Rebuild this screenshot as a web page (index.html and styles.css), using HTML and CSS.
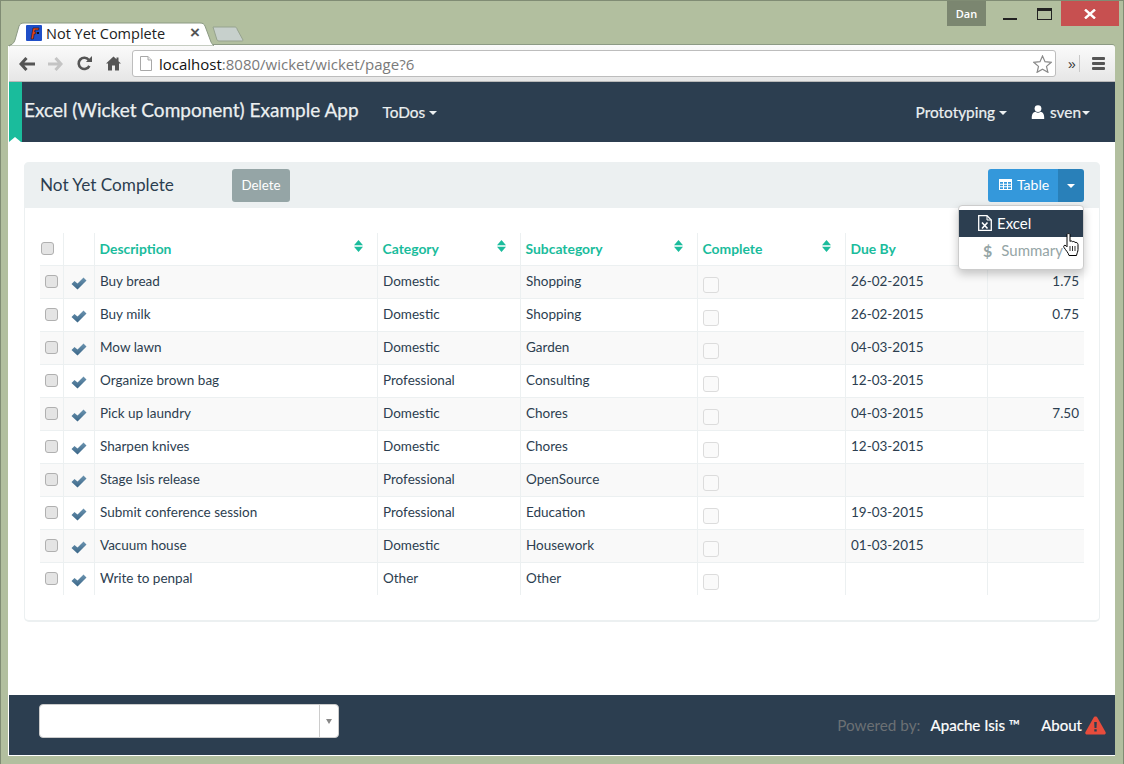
FILE: index.html
```html
<!DOCTYPE html>
<html lang="en">
<head>
<meta charset="utf-8">
<title>Not Yet Complete</title>
<link rel="stylesheet" href="styles.css">
</head>
<body>
<svg class="defs" width="0" height="0" aria-hidden="true">
  <defs>
    <linearGradient id="chk" x1="0" y1="0" x2="0" y2="1"><stop offset="0" stop-color="#6c94b0"/><stop offset="1" stop-color="#3a6688"/></linearGradient>
    <symbol id="check" viewBox="0 0 16 13"><path d="M0.500 7 L3.500 4 L6.500 6.500 L12.500 0.500 L15.500 3.500 L6.500 12.500 Z" fill="url(#chk)"/></symbol>
    <symbol id="sort" viewBox="0 0 9 12"><path d="M4.500 0 L9 5.300 H0 Z M0 6.700 H9 L4.500 12 Z" fill="#1abc9c"/></symbol>
  </defs>
</svg>
<div class="window">
  <div class="titlebar">
    <div class="tab">
      <svg class="tab-shape" width="206" height="24" viewBox="0 0 206 24"><path d="M0 24 C4 23 6 21 7 18 L11 4 C12 2 13 1 16 1 H192 C195 1 196 2 197 4 L203 20 C204 22 205 23 206 24 Z" fill="#fff" stroke="#8c9a84"/></svg>
      <svg class="favicon" width="16" height="16" viewBox="0 0 16 16"><rect width="16" height="16" rx="1" fill="#1f4fc8"/><path d="M5 14 L7 3 H13 L12.500 5 H9 L8.600 7 H10 L9.600 9 H8.200 L7.400 14 Z" fill="#e8401c" stroke="#1a1a1a" stroke-width=".6"/><rect x="11" y="7" width="2" height="2" fill="#111"/></svg>
      <span class="tab-title">Not Yet Complete</span>
      <span class="tab-close">×</span>
    </div>
    <svg class="newtab" width="32" height="16" viewBox="0 0 32 16"><path d="M1 1 H23 C24 1 25 2 25 3 L31 14 C31 15 30 15 29 15 H7 C6 15 5.500 14.500 5 14 Z" fill="#c7d0cc" stroke="#97a38f"/></svg>
    <div class="caption">
      <div class="user-badge">Dan</div>
      <div class="cap-btn">
        <span class="cap-min"></span>
      </div>
      <div class="cap-btn">
        <span class="cap-max"></span>
      </div>
      <div class="cap-close">
        <svg width="12" height="10" viewBox="0 0 12 10"><path d="M1 0.500 L11 9.500 M11 0.500 L1 9.500" stroke="#fff" stroke-width="2.400"/></svg>
      </div>
    </div>
  </div>

  <div class="browser">
    <div class="toolbar">
      <svg class="tool" width="16" height="14" viewBox="0 0 16 14"><path d="M7.500 1 L2 7 L7.500 13 M2.500 7 H16" fill="none" stroke="#555" stroke-width="3"/></svg>
      <svg class="tool tool-b" width="15" height="14" viewBox="0 0 15 14"><path d="M7.500 1 L13 7 L7.500 13 M12.500 7 H0" fill="none" stroke="#c4c4c4" stroke-width="3"/></svg>
      <svg class="tool tool-c" width="15" height="15" viewBox="0 0 16 16"><path d="M13.200 10.500 A6 6 0 1 1 12.600 4.300" fill="none" stroke="#555" stroke-width="2.800"/><path d="M9.500 6.500 H16 V0 Z" fill="#555"/></svg>
      <svg class="tool tool-d" width="15" height="15" viewBox="0 0 15 15"><path d="M7.500 0.500 L0 7.500 H2 V14.500 H6 V9.500 H9 V14.500 H13 V7.500 H15 L12.500 5.200 V1.500 H10.500 V3.300 Z" fill="#555"/></svg>
      <div class="address">
        <svg width="12" height="15" viewBox="0 0 12 15"><path d="M0.500 0.500 H8 L11.500 4 V14.500 H0.500 Z" fill="#fff" stroke="#a8a8a8"/><path d="M8 .5 V4 H11.500" fill="#eee" stroke="#a8a8a8"/></svg>
        <span class="url"><span class="url-host">localhost</span>:8080/wicket/wicket/page?6</span>
        <svg class="star" width="19" height="18" viewBox="0 0 19 18"><path d="M9.500 1 L12 6.700 L18.200 7.300 L13.500 11.400 L14.900 17.300 L9.500 14.200 L4.100 17.300 L5.500 11.400 L0.800 7.300 L7 6.700 Z" fill="#fff" stroke="#8a8a8a" stroke-width="1.200"/></svg>
      </div>
      <span class="more">»</span>
      <span class="tool-sep"></span>
      <span class="menu-btn"><i></i><i></i><i></i></span>
    </div>

    <nav class="navbar">
      <div class="nav-marker"></div>
      <a class="brand">Excel (Wicket Component) Example App</a>
      <a class="nav-link">ToDos <b class="caret"></b></a>
      <div class="nav-right">
        <a class="nav-link">Prototyping <b class="caret"></b></a>
        <a class="nav-link user-link">
          <svg width="14" height="14" viewBox="0 0 14 14"><circle cx="7" cy="3.600" r="3.400" fill="#fff"/><path d="M0.800 14 C0.400 9 2.500 7 4.500 6.800 C6 8 8 8 9.500 6.800 C11.500 7 13.600 9 13.200 14 Z" fill="#fff"/></svg>
          sven<b class="caret"></b>
        </a>
      </div>
    </nav>

    <main class="content">
      <section class="panel">
        <header class="panel-head">
          <h1 class="panel-title">Not Yet Complete</h1>
          <button class="btn-delete">Delete</button>
          <div class="btn-group">
            <button class="btn-table">
              <svg width="13" height="11" viewBox="0 0 13 11"><path fill-rule="evenodd" d="M0 0 H13 V11 H0 Z M1 3 V4.700 H4 V3 Z M5 3 V4.700 H8 V3 Z M9 3 V4.700 H12 V3 Z M1 5.700 V7.300 H4 V5.700 Z M5 5.700 V7.300 H8 V5.700 Z M9 5.700 V7.300 H12 V5.700 Z M1 8.300 V10 H4 V8.300 Z M5 8.300 V10 H8 V8.300 Z M9 8.300 V10 H12 V8.300 Z" fill="#fff"/></svg>
              Table
            </button>
            <button class="btn-toggle"><b class="caret"></b></button>
            <ul class="menu">
              <li class="menu-item active">
                <svg width="14" height="16" viewBox="0 0 14 16"><path d="M0.700 0.700 H9 L13.300 5 V15.300 H0.700 Z" fill="none" stroke="#fff" stroke-width="1.300"/><path d="M9 .7 V5 H13.300" fill="none" stroke="#fff"/><path d="M4 7.500 L9.500 13.500 M9.500 7.500 L4 13.500" stroke="#fff" stroke-width="1.600"/></svg>
                Excel
              </li>
              <li class="menu-item muted"><span class="dollar">$</span> Summary</li>
            </ul>
            <svg class="cursor" width="16" height="23" viewBox="0 0 16 23"><path d="M4 1.500 C4 0.300 7 0.300 7 1.500 V8.500 C7.500 7.700 9.300 7.700 9.600 8.800 C10.200 8.200 11.800 8.400 12 9.500 C13 9 15 9.800 15 11.500 V16.500 C15 18.500 14 20 13.500 22.500 H6 C5.500 20 3 17.500 1 14.500 C0 13 1.500 11.500 3 12.800 L4 13.800 Z" fill="#fff" stroke="#000" stroke-width="1"/><path d="M7 13 V18 M9.500 13 V18 M12 13 V18" stroke="#000" stroke-width=".8"/></svg>
          </div>
        </header>
        <div class="panel-body">
          <table class="data">
            <colgroup>
              <col class="c1"><col class="c2"><col class="c3"><col class="c4"><col class="c5"><col class="c6"><col class="c7"><col class="c8">
            </colgroup>
            <thead>
              <tr>
                <th class="center"><input type="checkbox" class="cb"></th>
                <th></th>
                <th><span class="th-in">Description<svg width="9" height="12"><use href="#sort"/></svg></span></th>
                <th><span class="th-in">Category<svg width="9" height="12"><use href="#sort"/></svg></span></th>
                <th><span class="th-in">Subcategory<svg width="9" height="12"><use href="#sort"/></svg></span></th>
                <th><span class="th-in">Complete<svg width="9" height="12"><use href="#sort"/></svg></span></th>
                <th><span class="th-in">Due By</span></th>
                <th></th>
              </tr>
            </thead>
            <tbody>
              <tr><td class="rowcb"><input type="checkbox" class="cb"></td><td class="ck"><svg width="16" height="13"><use href="#check"/></svg></td><td>Buy bread</td><td>Domestic</td><td>Shopping</td><td class="donecell"><span class="done"></span></td><td>26-02-2015</td><td class="num">1.75</td></tr>
              <tr><td class="rowcb"><input type="checkbox" class="cb"></td><td class="ck"><svg width="16" height="13"><use href="#check"/></svg></td><td>Buy milk</td><td>Domestic</td><td>Shopping</td><td class="donecell"><span class="done"></span></td><td>26-02-2015</td><td class="num">0.75</td></tr>
              <tr><td class="rowcb"><input type="checkbox" class="cb"></td><td class="ck"><svg width="16" height="13"><use href="#check"/></svg></td><td>Mow lawn</td><td>Domestic</td><td>Garden</td><td class="donecell"><span class="done"></span></td><td>04-03-2015</td><td class="num"></td></tr>
              <tr><td class="rowcb"><input type="checkbox" class="cb"></td><td class="ck"><svg width="16" height="13"><use href="#check"/></svg></td><td>Organize brown bag</td><td>Professional</td><td>Consulting</td><td class="donecell"><span class="done"></span></td><td>12-03-2015</td><td class="num"></td></tr>
              <tr><td class="rowcb"><input type="checkbox" class="cb"></td><td class="ck"><svg width="16" height="13"><use href="#check"/></svg></td><td>Pick up laundry</td><td>Domestic</td><td>Chores</td><td class="donecell"><span class="done"></span></td><td>04-03-2015</td><td class="num">7.50</td></tr>
              <tr><td class="rowcb"><input type="checkbox" class="cb"></td><td class="ck"><svg width="16" height="13"><use href="#check"/></svg></td><td>Sharpen knives</td><td>Domestic</td><td>Chores</td><td class="donecell"><span class="done"></span></td><td>12-03-2015</td><td class="num"></td></tr>
              <tr><td class="rowcb"><input type="checkbox" class="cb"></td><td class="ck"><svg width="16" height="13"><use href="#check"/></svg></td><td>Stage Isis release</td><td>Professional</td><td>OpenSource</td><td class="donecell"><span class="done"></span></td><td></td><td class="num"></td></tr>
              <tr><td class="rowcb"><input type="checkbox" class="cb"></td><td class="ck"><svg width="16" height="13"><use href="#check"/></svg></td><td>Submit conference session</td><td>Professional</td><td>Education</td><td class="donecell"><span class="done"></span></td><td>19-03-2015</td><td class="num"></td></tr>
              <tr><td class="rowcb"><input type="checkbox" class="cb"></td><td class="ck"><svg width="16" height="13"><use href="#check"/></svg></td><td>Vacuum house</td><td>Domestic</td><td>Housework</td><td class="donecell"><span class="done"></span></td><td>01-03-2015</td><td class="num"></td></tr>
              <tr><td class="rowcb"><input type="checkbox" class="cb"></td><td class="ck"><svg width="16" height="13"><use href="#check"/></svg></td><td>Write to penpal</td><td>Other</td><td>Other</td><td class="donecell"><span class="done"></span></td><td></td><td class="num"></td></tr>
            </tbody>
          </table>
        </div>
      </section>
    </main>

    <footer class="footer">
      <div class="select"><span class="select-arrow"><b></b></span></div>
      <div class="foot-right">
        <span class="powered">Powered by:</span>
        <a class="foot-link isis">Apache Isis ™</a>
        <a class="foot-link">About</a>
        <svg width="21" height="19" viewBox="0 0 21 19"><path d="M10.500 0.500 C11.500 0.500 12 1 12.500 1.800 L20.500 16 C21.200 17.300 20.500 18.500 19 18.500 H2 C0.500 18.500 -0.200 17.300 .5 16 L8.500 1.800 C9 1 9.500 0.500 10.500 0.500 Z" fill="#e74c3c"/><path d="M9.200 6 H11.800 L11.500 12 H9.500 Z M9.300 13.300 H11.700 V15.600 H9.300 Z" fill="#2c3e50"/></svg>
      </div>
    </footer>
  </div>
</div>
</body>
</html>
```
FILE: styles.css
```css
* { box-sizing: border-box; }
html, body { margin: 0; padding: 0; height: 100%; overflow: hidden; }
body { font-family: Lato, "Open Sans", sans-serif; font-size: 14px; color: #2c3e50; background: #b2bf9f; }
.defs { position: absolute; }
.window { width: 1124px; height: 764px; display: flex; flex-direction: column; background: #b2bf9f; border: 1px solid #808c74; border-bottom: 0; padding: 0 8px 8px 7px; }

.titlebar { height: 44px; flex: none; display: flex; align-items: flex-end; position: relative; }
.tab { width: 212px; height: 24px; position: relative; margin-left: 3px; display: flex; align-items: center; padding: 0 0 0 15px; z-index: 1; }
.tab-shape { position: absolute; left: -3px; bottom: -1px; }
.favicon { position: relative; flex: none; }
.tab-title { position: relative; font-family: "Open Sans", sans-serif; font-size: 14.500px; color: #222; margin-left: 4px; white-space: nowrap; }
.tab-close { position: absolute; left: 179px; top: 2px; font-size: 17px; font-weight: 700; color: #555; font-family: "Liberation Sans", sans-serif; }
.newtab { position: relative; margin: 0 0 3px -11px; flex: none; }
.caption { position: absolute; right: -4px; top: 0; display: flex; align-items: flex-start; }
.user-badge { width: 39px; height: 25px; background: #7b8670; color: #fff; font-family: "Open Sans", sans-serif; font-size: 11px; font-weight: 600; display: flex; align-items: center; justify-content: center; margin-right: 7px; }
.cap-btn { width: 34px; height: 25px; display: flex; align-items: center; justify-content: center; }
.cap-min { width: 14px; height: 2px; background: #222; margin-top: 11px; }
.cap-max { width: 15px; height: 12px; border: 1px solid #222; border-top-width: 3px; }
.cap-close { width: 58px; height: 25px; background: #c75050; display: flex; align-items: center; justify-content: center; }

.browser { flex: 1; display: flex; flex-direction: column; border-left: 1px solid #fff; border-bottom: 1px solid #fff; min-height: 0; }
.toolbar { height: 37px; flex: none; background: linear-gradient(#fbfbfb, #e6e6e6); border-bottom: 1px solid #b9b9b9; border-radius: 3px 3px 0 0; box-shadow: 0 -1px 0 #8c9a84; display: flex; align-items: center; padding: 1px 0 0 10px; }
.tool { flex: none; }
.tool-b { margin-left: 13px; }
.tool-c { margin-left: 14px; }
.tool-d { margin-left: 14px; }
.address { margin-left: 11px; width: 924px; height: 27px; background: #fff; border: 1px solid #bdbdbd; border-radius: 3px; display: flex; align-items: center; padding: 0 3px 0 7px; flex: none; }
.url { margin-left: 7px; font-family: "Open Sans", sans-serif; font-size: 15px; color: #7a7a7a; white-space: nowrap; flex: 1; }
.url-host { color: #111; }
.star { flex: none; }
.more { margin-left: 12px; font-size: 14px; color: #333; font-family: "Liberation Sans", sans-serif; }
.tool-sep { width: 1px; height: 17px; background: #c9c9c9; margin-left: 3px; }
.menu-btn { margin-left: 12px; display: flex; flex-direction: column; gap: 2px; }
.menu-btn i { display: block; width: 13px; height: 3px; background: #555; border-radius: 1px; }

.navbar { height: 60px; flex: none; background: #2c3e50; display: flex; align-items: center; color: #fff; position: relative; padding: 0 25px 0 15px; }
.nav-marker { position: absolute; left: 0; top: 0; width: 13px; height: 60px; background: #1abc9c; }
.nav-marker::after { content: ""; position: absolute; left: 0; bottom: 0; border-bottom: 5px solid #fff; border-left: 6.500px solid transparent; border-right: 6.500px solid transparent; }
.brand { font-size: 19px; margin-top: -6px; white-space: nowrap; color: #ecf0f1; -webkit-text-stroke: .25px #ecf0f1; }
.nav-link { font-size: 15.400px; white-space: nowrap; color: #ecf0f1; display: inline-flex; align-items: center; -webkit-text-stroke: .2px #ecf0f1; }
.brand + .nav-link { margin-left: 24px; }
.nav-right { margin-left: auto; display: flex; gap: 24px; align-items: center; }
.user-link svg { margin-right: 5px; }
.caret { display: inline-block; width: 0; height: 0; border-top: 4px solid currentColor; border-left: 4px solid transparent; border-right: 4px solid transparent; margin-left: 4px; margin-top: 2px; }
.user-link .caret { margin-left: 1px; }

.content { flex: 1; background: #fff; padding: 20px 15px 0; min-height: 0; }
.panel { height: 460px; border: 1px solid #ecf0f1; border-width: 0 1px 2px; border-radius: 5px; }
.panel-head { height: 46px; background: #ecf0f1; border-radius: 5px 5px 0 0; display: flex; align-items: center; padding: 0 16px; margin: 0 -1px; }
.panel-title { margin: 0 0 2px; font-size: 17.200px; font-weight: 400; width: 192px; white-space: nowrap; }
.btn-delete { width: 58px; height: 33px; background: #95a5a6; color: #fff; border: 0; border-radius: 3px; font: 13.300px Lato, sans-serif; padding: 0; }
.btn-group { margin-left: auto; display: flex; position: relative; }
.btn-table { width: 70px; height: 33px; background: #3498db; border: 0; border-radius: 3px 0 0 3px; color: #fff; font: 14px Lato, sans-serif; display: flex; align-items: center; justify-content: center; gap: 5px; padding: 0 0 1px 2px; }
.btn-toggle { width: 26px; height: 33px; background: #2980b9; border: 0; border-radius: 0 3px 3px 0; color: #fff; padding: 0; display: flex; align-items: center; justify-content: center; }
.btn-toggle .caret { margin: 2px 0 0; }
.menu { position: absolute; right: 0; top: 36px; width: 126px; height: 65px; margin: 0; padding: 4px 0; list-style: none; background: #fff; border: 1px solid #ccc; border-radius: 4px; box-shadow: 0 4px 10px rgba(0,0,0,.22); z-index: 5; }
.menu-item { height: 27px; display: flex; align-items: center; font-size: 15px; padding-left: 19px; white-space: nowrap; }
.menu-item svg { margin-right: 5px; }
.menu-item.active { background: #2c3e50; color: #fff; }
.menu-item.muted { color: #95a5a6; padding-left: 24px; }
.dollar { font-size: 16px; font-weight: 700; margin-right: 9px; }
.cursor { position: absolute; left: 75px; top: 64px; z-index: 6; }

.panel-body { padding: 25px 15px 0; }
.data { border-collapse: collapse; table-layout: fixed; width: 1044px; font-size: 13.500px; }
.c1 { width: 23px; } .c2 { width: 31px; } .c3 { width: 283px; } .c4 { width: 143px; }
.c5 { width: 177px; } .c6 { width: 148px; } .c7 { width: 142px; } .c8 { width: 97px; }
.data th, .data td { padding: 0 5px 0 5.500px; border-left: 1px solid #ecf0f1; text-align: left; vertical-align: middle; white-space: nowrap; }
.data th:first-child, .data td:first-child { border-left: 0; padding: 0; }
.data th { height: 32px; font-size: 13.900px; font-weight: 700; color: #1abc9c; padding-top: 0; padding-left: 5px; border-bottom: 1px solid #ecf0f1; }
.data td { height: 33px; border-top: 1px solid #ecf0f1; padding-bottom: 2px; }
.data td.donecell { padding-left: 5px; }
.data tbody tr:nth-child(odd) { background: #f9f9f9; }
.th-in { display: flex; justify-content: space-between; align-items: center; padding-right: 9px; }
.th-in svg { margin-top: -6px; }
.cb { appearance: none; -webkit-appearance: none; display: block; width: 13px; height: 13px; margin: 0; background: #e4e4e4; border: 1px solid #b0b0b0; border-radius: 3px; }
th.center .cb { margin-left: 1px; }
.rowcb .cb { margin: 0 0 0 5px; }
.ck { padding: 3px 0 0 7px !important; }
.ck svg { display: block; }
.done { display: block; width: 16px; height: 16px; background: #fafafa; border: 1px solid #dcdcdc; border-radius: 3px; margin: 8px 0 0 0; }
.num { text-align: right !important; padding-right: 5px !important; }

.footer { height: 60px; flex: none; background: #2c3e50; display: flex; align-items: center; padding: 0 9px 0 30px; }
.select { width: 300px; height: 34px; margin-bottom: 8px; background: #fff; border: 1px solid #ccc; border-radius: 4px; display: flex; justify-content: flex-end; }
.select-arrow { width: 19px; border-left: 1px solid #ccc; display: flex; align-items: center; justify-content: center; }
.select-arrow b { width: 0; height: 0; border-top: 5px solid #888; border-left: 3px solid transparent; border-right: 3px solid transparent; }
.foot-right { margin-left: auto; display: flex; align-items: center; font-size: 15px; }
.powered { color: #6b7074; margin-right: 10px; font-size: 15.300px; }
.foot-link { color: #fff; -webkit-text-stroke: .2px #fff; }
.isis { margin-right: 21px; font-size: 15.150px; }
.foot-right svg { margin-left: 3px; }
```
